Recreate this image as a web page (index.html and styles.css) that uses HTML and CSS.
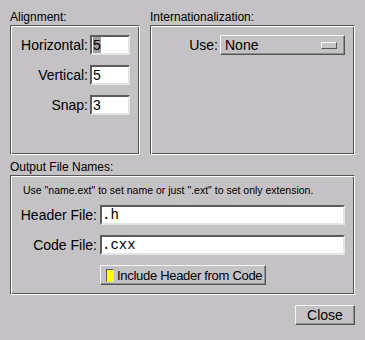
FILE: index.html
```html
<!DOCTYPE html>
<html lang="en">
<head>
    <meta charset="UTF-8">
    <title>Preferences</title>
    <link rel="stylesheet" href="styles.css">
</head>
<body>

<div class="dialog">
    <div class="top-row">
        <section class="group group-align">
            <div class="group-label">Alignment:</div>
            <div class="frame frame-align">
                <div class="field"><label>Horizontal:</label><div class="input short"><span class="selected">5</span></div></div>
                <div class="field"><label>Vertical:</label><div class="input short">5</div></div>
                <div class="field"><label>Snap:</label><div class="input short">3</div></div>
            </div>
        </section>
        <section class="group group-intl">
            <div class="group-label">Internationalization:</div>
            <div class="frame frame-intl">
                <div class="field">
                    <label>Use:</label>
                    <div class="choice">None<span class="choice-mark"></span></div>
                </div>
            </div>
        </section>
    </div>

    <section class="group group-output">
        <div class="group-label">Output File Names:</div>
        <div class="frame frame-output">
            <div class="hint">Use "name.ext" to set name or just ".ext" to set only extension.</div>
            <div class="file-row"><label>Header File:</label><div class="input wide">.h</div></div>
            <div class="file-row"><label>Code File:</label><div class="input wide">.cxx</div></div>
            <button class="light-btn"><span class="light"></span>Include Header from Code</button>
        </div>
    </section>

    <div class="actions">
        <button class="close-btn">Close</button>
    </div>
</div>

</body>
</html>
```

FILE: styles.css
```css
body {
    margin: 0;
    background: #c4c2c5;
    font-family: "Liberation Sans", Arial, sans-serif;
    color: #000;
}
.dialog {
    width: 365px;
    height: 340px;
    box-sizing: border-box;
    padding: 10px 10px 0 10px;
}
.top-row {
    display: flex;
    gap: 10px;
}
.group-label {
    font-size: 12px;
    line-height: 15px;
    height: 15px;
    white-space: nowrap;
}
.frame {
    box-sizing: border-box;
    border: 1px solid;
    border-color: #555 #fff #fff #555;
    box-shadow: inset 1px 1px 0 #fff, inset -1px -1px 0 #555;
}
.group-align {
    width: 130px;
}
.group-intl {
    width: 205px;
}
.frame-align,
.frame-intl {
    height: 130px;
    padding: 9px 9px 0 0;
    display: flex;
    flex-direction: column;
    align-items: flex-end;
    gap: 10px;
}
.field {
    display: flex;
    align-items: center;
    gap: 2px;
    height: 20px;
}
label {
    font-size: 14px;
    white-space: nowrap;
}
.input {
    box-sizing: border-box;
    height: 20px;
    background: #fff;
    border: 2px solid;
    border-color: #5c5c5c #e4e4e4 #e4e4e4 #5c5c5c;
    font-size: 14px;
    line-height: 16px;
    padding-left: 1px;
    white-space: nowrap;
}
.short {
    width: 40px;
}
.selected {
    background: #9f9ea0;
}
.choice {
    box-sizing: border-box;
    width: 125px;
    height: 20px;
    border: 1px solid;
    border-color: #f4f4f4 #555 #555 #f4f4f4;
    box-shadow: inset -1px -1px 0 #8d8d8d;
    display: flex;
    align-items: center;
    justify-content: space-between;
    padding: 0 7px 0 4px;
    font-size: 14px;
}
.choice-mark {
    box-sizing: border-box;
    width: 16px;
    height: 7px;
    border: 1px solid;
    border-color: #fff #555 #555 #fff;
}

.group-output {
    margin-top: 5px;
}
.frame-output {
    height: 120px;
    padding: 7px 9px 0 0;
}
.hint {
    font-size: 10.5px;
    line-height: 14px;
    margin-left: 12px;
    white-space: nowrap;
}
.file-row {
    display: flex;
    align-items: center;
    gap: 3px;
    height: 20px;
    margin-top: 10px;
}
.hint + .file-row {
    margin-top: 8px;
}
.file-row label {
    width: 86px;
    text-align: right;
}
.wide {
    flex: 1;
    font-family: "Liberation Mono", "Courier New", monospace;
    padding-left: 0;
}

button {
    font-family: inherit;
    color: #000;
    background: #c4c2c5;
    box-sizing: border-box;
    height: 20px;
    padding: 0;
    border: 1px solid;
    border-color: #f4f4f4 #555 #555 #f4f4f4;
    box-shadow: inset -1px -1px 0 #8d8d8d;
    font-size: 14px;
}
.light-btn {
    display: flex;
    align-items: center;
    gap: 3px;
    width: 166px;
    margin: 10px 0 0 89px;
    padding-left: 5px;
    font-size: 13px;
    letter-spacing: -0.3px;
    white-space: nowrap;
}
.light {
    box-sizing: border-box;
    width: 8px;
    height: 13px;
    background: #ffff00;
    border: 1px solid;
    border-color: #555 #ddd #ddd #555;
}
.actions {
    display: flex;
    justify-content: flex-end;
    margin-top: 10px;
}
.close-btn {
    width: 60px;
}
```
